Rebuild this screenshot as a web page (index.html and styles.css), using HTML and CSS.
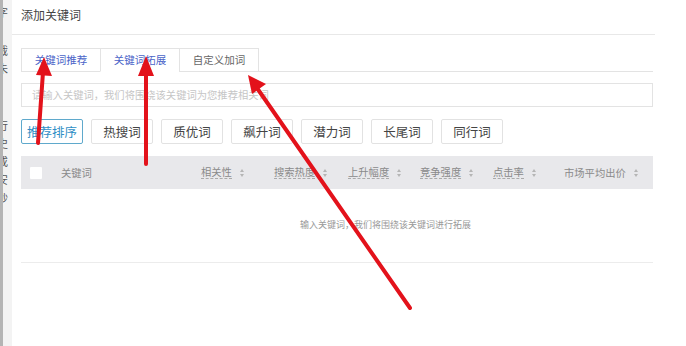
FILE: index.html
```html
<!DOCTYPE html>
<html lang="zh-CN">
<head>
    <meta charset="UTF-8">
    <meta name="viewport" content="width=device-width, initial-scale=1.0">
    <title>添加关键词</title>
    <link rel="stylesheet" href="styles.css">
</head>
<body>
    <div class="page-edge">
        <span class="edge-gap-sm">字</span>
        <span class="edge-gap">截</span>
        <span>未</span>
        <span class="edge-gap">行</span>
        <span>史</span>
        <span>或</span>
        <span>安</span>
        <span>纱</span>
    </div>

    <div class="modal">
        <div class="modal-header">添加关键词</div>

        <div class="modal-body">
            <div class="tabs">
                <div class="tab tab-blue">关键词推荐</div>
                <div class="tab tab-blue active">关键词拓展</div>
                <div class="tab">自定义加词</div>
            </div>

            <div class="search-input">请输入关键词，我们将围绕该关键词为您推荐相关词</div>

            <div class="filters">
                <div class="filter-btn active">推荐排序</div>
                <div class="filter-btn">热搜词</div>
                <div class="filter-btn">质优词</div>
                <div class="filter-btn">飙升词</div>
                <div class="filter-btn">潜力词</div>
                <div class="filter-btn">长尾词</div>
                <div class="filter-btn">同行词</div>
            </div>

            <div class="table-head">
                <div class="col col-check"><span class="checkbox"></span></div>
                <div class="col col-word">关键词</div>
                <div class="col col-rel"><span class="dotted">相关性</span><i class="sort"></i></div>
                <div class="col col-hot"><span class="dotted">搜索热度</span><i class="sort"></i></div>
                <div class="col col-rise"><span class="dotted">上升幅度</span><i class="sort"></i></div>
                <div class="col col-comp"><span class="dotted">竞争强度</span><i class="sort"></i></div>
                <div class="col col-ctr"><span class="dotted">点击率</span><i class="sort"></i></div>
                <div class="col col-price">市场平均出价<i class="sort"></i></div>
            </div>

            <div class="table-empty">输入关键词，我们将围绕该关键词进行拓展</div>
        </div>
    </div>

    <!-- red annotation arrows drawn over the screenshot -->
    <svg class="arrows" width="686" height="346" viewBox="0 0 686 346">
        <g stroke="#e3121b" stroke-width="4" stroke-linecap="round" fill="none">
            <line x1="38" y1="143" x2="43" y2="72" />
            <line x1="146" y1="164" x2="146" y2="72" />
            <line x1="410" y1="308" x2="257" y2="88" />
        </g>
        <g fill="#e3121b">
            <polygon points="44,57 52,76 36,75" />
            <polygon points="146,56 154,76 138,76" />
            <polygon points="248,75 266,84 252,94" />
        </g>
    </svg>
</body>
</html>
```

FILE: styles.css
```css
* {
    margin: 0;
    padding: 0;
    box-sizing: border-box;
}

body {
    width: 686px;
    height: 346px;
    overflow: hidden;
    display: flex;
    background: #fff;
    font-family: "Noto Sans CJK SC", "Noto Sans", sans-serif;
    color: #333;
    position: relative;
}

.page-edge {
    width: 12px;
    flex-shrink: 0;
    background: #f3f3f3;
    border-left: 3px solid #b4b4b4;
    overflow: hidden;
    display: flex;
    flex-direction: column;
    font-size: 11px;
    line-height: 18px;
    color: #555;
}

.page-edge span {
    margin-left: -6px;
}

.page-edge .edge-gap-sm {
    margin-top: 3px;
}

.page-edge .edge-gap {
    margin-top: 20px;
}

.page-edge .edge-gap + span + .edge-gap {
    margin-top: 39px;
}

.modal {
    width: 643px;
    background: #fff;
}

.modal-header {
    height: 35px;
    padding: 6px 0 0 9px;
    font-size: 12px;
    line-height: 18px;
    color: #444;
    border-bottom: 1px solid #e8e8e8;
}

.modal-body {
    margin-left: 9px;
    width: 632px;
    padding-top: 13px;
}

.tabs {
    display: flex;
    height: 24px;
    border-bottom: 1px solid #e3e3e3;
}

.tab {
    width: 80px;
    height: 24px;
    border: 1px solid #e3e3e3;
    margin-right: -1px;
    font-size: 10.5px;
    line-height: 22px;
    text-align: center;
    color: #666;
    background: #fff;
}

.tab-blue {
    color: #4a64c8;
}

.tab.active {
    border-bottom-color: #fff;
}

.search-input {
    margin-top: 11px;
    height: 24px;
    border: 1px solid #e3e3e3;
    padding-left: 10px;
    font-size: 10.3px;
    line-height: 22px;
    color: #c6c6c6;
}

.filters {
    display: flex;
    gap: 8px;
    margin-top: 12px;
}

.filter-btn {
    width: 62px;
    height: 25px;
    border: 1px solid #e2e2e2;
    border-radius: 2px;
    font-size: 12.5px;
    line-height: 23px;
    text-align: center;
    color: #444;
}

.filter-btn.active {
    border-color: #5fa9cc;
    color: #2f8fc6;
}

.table-head {
    display: flex;
    align-items: center;
    margin-top: 12px;
    height: 33px;
    background: #e8e8eb;
    font-size: 10.3px;
    color: #8a8a8a;
}

.col {
    display: flex;
    align-items: center;
}

.col-check {
    width: 40px;
    padding-left: 9px;
}

.checkbox {
    width: 12px;
    height: 12px;
    background: #fff;
    border-radius: 1px;
}

.col-word { width: 140px; }
.col-rel { width: 73px; }
.col-hot { width: 74px; }
.col-rise { width: 72px; }
.col-comp { width: 73px; }
.col-ctr { width: 71px; }

.dotted {
    border-bottom: 1px dashed #aaa;
    line-height: 12px;
}

.sort {
    position: relative;
    width: 5px;
    height: 8px;
    margin-left: 8px;
}

.sort::before,
.sort::after {
    content: '';
    position: absolute;
    left: 0;
    border-left: 2.5px solid transparent;
    border-right: 2.5px solid transparent;
}

.sort::before {
    top: 0;
    border-bottom: 3px solid #b5b5b5;
}

.sort::after {
    bottom: 0;
    border-top: 3px solid #b5b5b5;
}

.table-empty {
    height: 74px;
    border-bottom: 1px solid #ececec;
    padding-top: 29px;
    padding-left: 279px;
    font-size: 9px;
    color: #999;
}

.arrows {
    position: absolute;
    left: 0;
    top: 0;
}
```
